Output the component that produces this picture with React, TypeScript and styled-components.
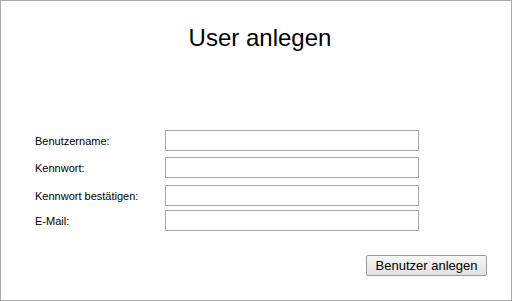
import React from "react";
import styled, { createGlobalStyle } from "styled-components";

const GlobalStyle = createGlobalStyle`
  html, body {
    margin: 0;
    padding: 0;
    background: #ffffff;
  }
  body {
    font-family: "Liberation Sans", Arial, sans-serif;
  }
`;

const Frame = styled.div`
  box-sizing: border-box;
  width: 512px;
  height: 301px;
  border: 1px solid #a9a9a9;
  display: flex;
  flex-direction: column;
`;

const Title = styled.h1`
  margin: 23px 0 0;
  padding-left: 8px;
  font-size: 24px;
  font-weight: normal;
  line-height: 27px;
  text-align: center;
  color: #000;
`;

const Form = styled.form`
  margin-top: 79px;
  padding-left: 34px;
  display: flex;
  flex-direction: column;
`;

const Row = styled.div<{ $space: number }>`
  display: flex;
  align-items: center;
  margin-top: ${(p) => p.$space}px;
`;

const Label = styled.label`
  width: 130px;
  font-size: 11px;
  color: #000;
`;

const Field = styled.input`
  box-sizing: border-box;
  width: 254px;
  height: 21px;
  margin: 0;
  border: 1px solid #a9a9a9;
  background: #fff;
  font-family: inherit;
  font-size: 12px;
  padding: 0 3px;
  outline: none;
`;

const Actions = styled.div`
  display: flex;
  justify-content: flex-end;
  padding-right: 24px;
  margin-top: 24px;
`;

const Button = styled.button`
  box-sizing: border-box;
  width: 121px;
  height: 21px;
  padding: 0;
  border: 1px solid #9a9a9a;
  border-radius: 2px;
  background: linear-gradient(#f7f7f7, #e1e1e1);
  font-family: "Liberation Sans", Arial, sans-serif;
  font-size: 13px;
  color: #000;
`;

const fields = [
  { id: "user", label: "Benutzername:", type: "text", space: 0 },
  { id: "pw", label: "Kennwort:", type: "password", space: 6 },
  { id: "pw2", label: "Kennwort bestätigen:", type: "password", space: 7 },
  { id: "mail", label: "E-Mail:", type: "email", space: 4 },
];

export default function App() {
  return (
    <>
      <GlobalStyle />
      <Frame>
        <Title>User anlegen</Title>
        <Form onSubmit={(e) => e.preventDefault()}>
          {fields.map((f) => (
            <Row key={f.id} $space={f.space}>
              <Label htmlFor={f.id}>{f.label}</Label>
              <Field id={f.id} type={f.type} />
            </Row>
          ))}
          <Actions>
            <Button type="submit">Benutzer anlegen</Button>
          </Actions>
        </Form>
      </Frame>
    </>
  );
}
